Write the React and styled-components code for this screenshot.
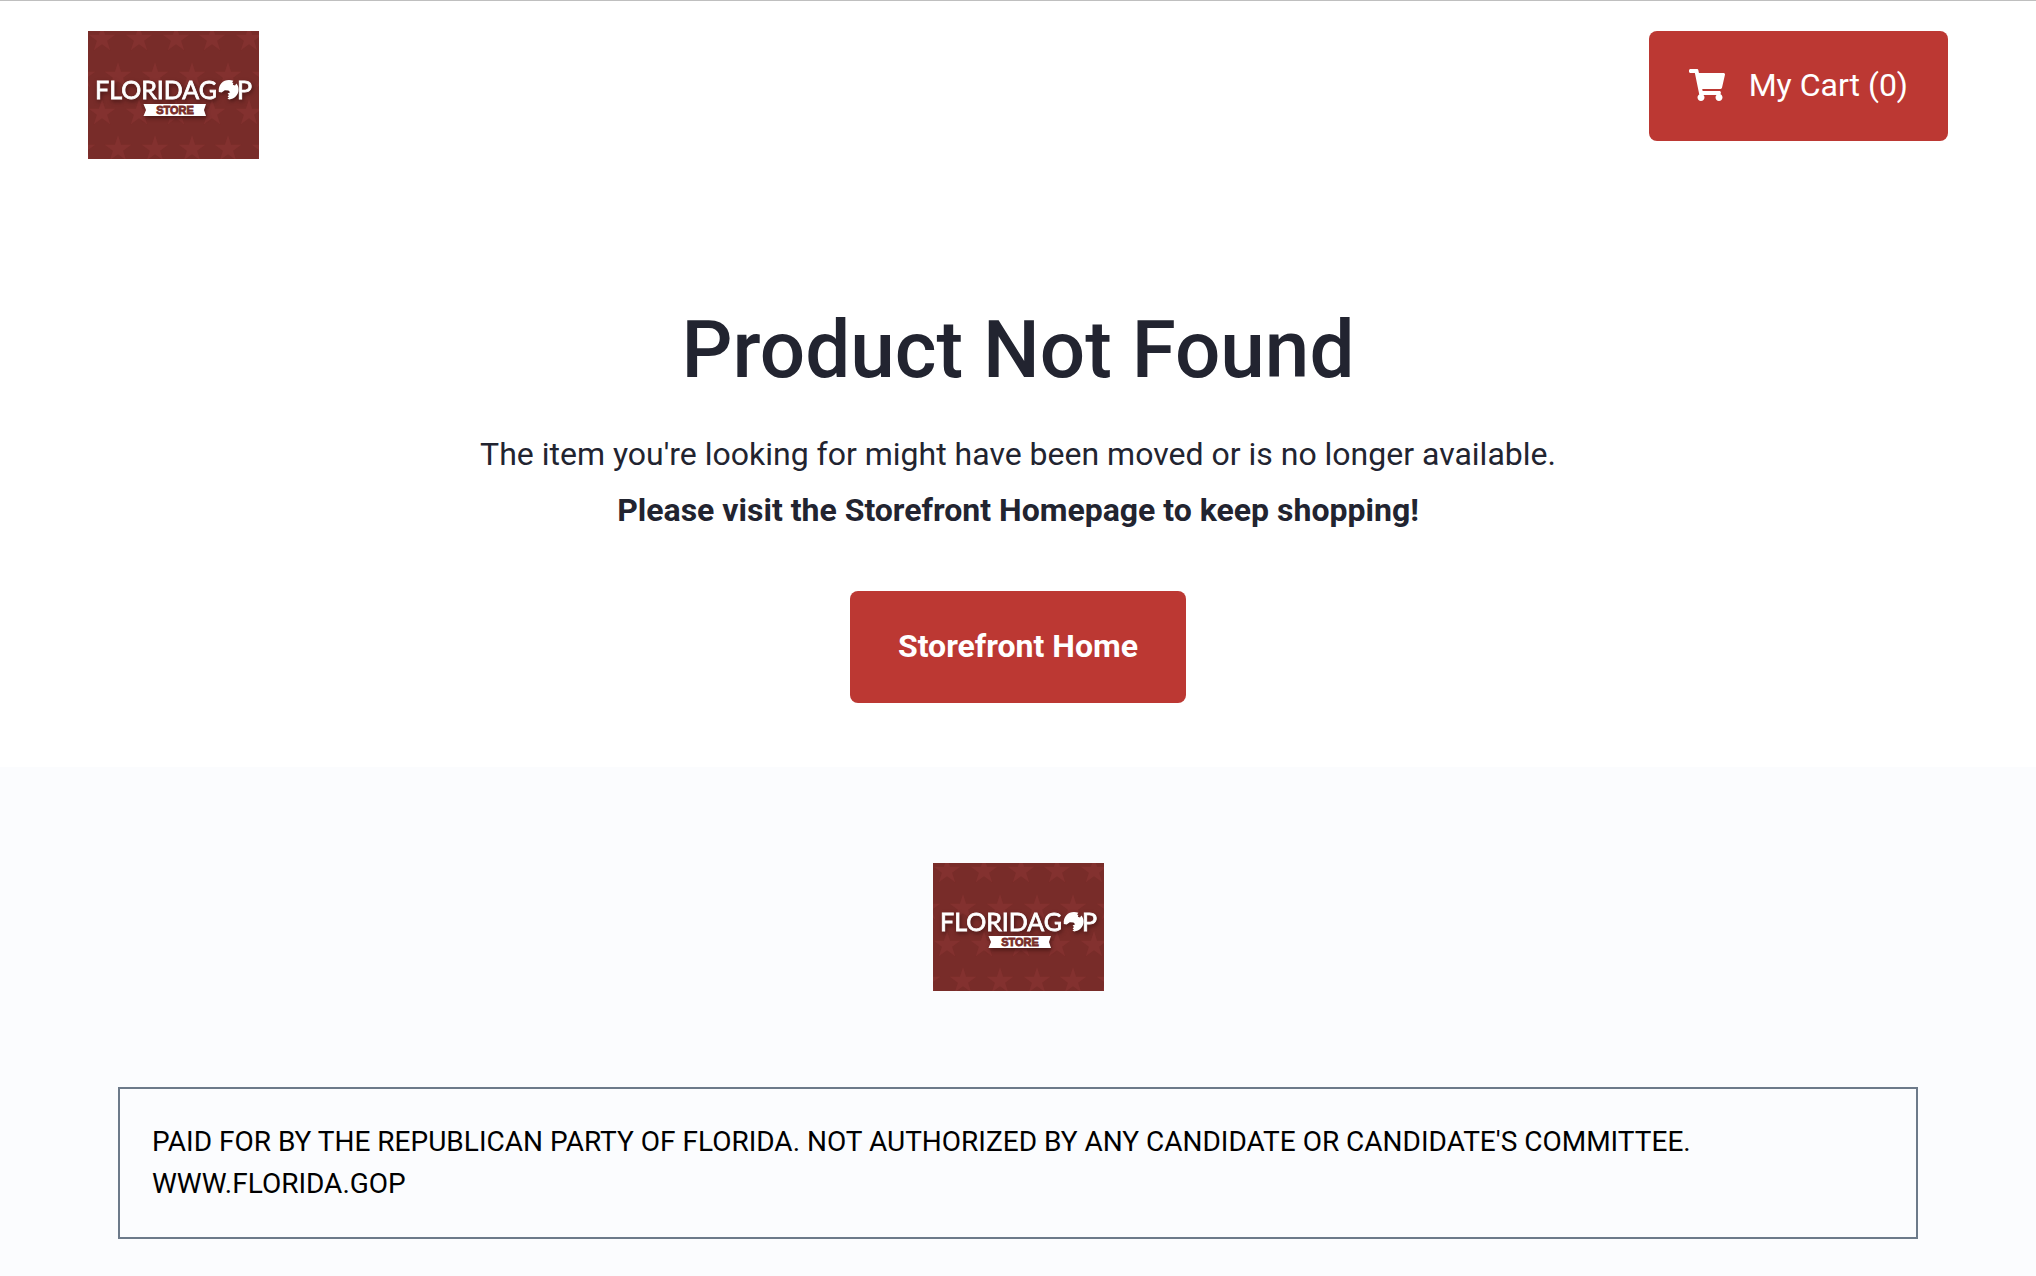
import React from "react";
import styled, { createGlobalStyle } from "styled-components";
import { FaShoppingCart } from "react-icons/fa";

const Theme = {
  primary: "#bc3833",
  text: "#222430",
  surface: "#fbfcfe",
  border: "#6c7a8a",
  font: "Roboto, sans-serif",
};

const GlobalStyle = createGlobalStyle`
  * {
    box-sizing: border-box;
  }

  body {
    margin: 0;
    background-color: #ffffff;
    color: ${Theme.text};
    font-family: ${Theme.font};
    font-size: 32px;
    line-height: 56px;
  }
`;

const Page = styled.div`
  display: flex;
  flex-direction: column;
  min-height: 100vh;
  border-top: 1px solid #bfbfbf;
`;

const Header = styled.header`
  display: flex;
  justify-content: space-between;
  align-items: flex-start;
  width: 100%;
  max-width: 1920px;
  margin: 0 auto;
  padding: 30px;
`;

const LogoLink = styled.a`
  display: block;
  width: 171px;
`;

const LogoImage = styled.svg`
  display: block;
  width: 100%;
  height: auto;
`;

const CartButton = styled.button`
  display: flex;
  align-items: center;
  gap: 24px;
  padding: 26px 40px 28px;
  border: none;
  border-radius: 8px;
  background-color: ${Theme.primary};
  color: #ffffff;
  font-family: ${Theme.font};
  font-size: 32px;
  line-height: 56px;
  cursor: pointer;
`;

const CartIcon = styled(FaShoppingCart)`
  width: 36px;
  height: 32px;
`;

const Main = styled.main`
  display: flex;
  flex-direction: column;
  align-items: center;
  padding: 113px 32px 64px;
  text-align: center;
`;

const Title = styled.h1`
  margin: 0 0 28px;
  font-size: 80px;
  font-weight: 500;
  line-height: 96px;
`;

const Message = styled.p`
  margin: 0;
  font-weight: ${({ $bold }) => ($bold ? 700 : 400)};
`;

const HomeLink = styled.a`
  margin-top: 53px;
  padding: 27px 48px 29px;
  border-radius: 8px;
  background-color: ${Theme.primary};
  color: #ffffff;
  font-weight: 700;
  text-decoration: none;
`;

const Footer = styled.footer`
  display: flex;
  flex: 1;
  flex-direction: column;
  align-items: center;
  gap: 96px;
  padding: 96px 32px 36px;
  background-color: ${Theme.surface};
`;

const Disclaimer = styled.p`
  width: 100%;
  max-width: 1800px;
  margin: 0;
  padding: 32px;
  border: 2px solid ${Theme.border};
  color: #000000;
  font-size: 28px;
  line-height: 42px;
`;

const starRows = [
  { y: 8, x: [14, 51, 88, 124, 161] },
  { y: 45, x: [-6, 30, 67, 104, 140, 177] },
  { y: 82, x: [14, 51, 88, 124, 161] },
  { y: 118, x: [-6, 30, 67, 104, 140, 177] },
];

const Logo = () => (
  <LogoImage viewBox="0 0 171 128" role="img" aria-label="Florida GOP Store">
    <rect width="171" height="128" fill="#782c29" />
    <g fill="#83312f">
      {starRows.map((row) =>
        row.x.map((x) => (
          <path
            key={`${x}-${row.y}`}
            transform={`translate(${x} ${row.y})`}
            d="M0 -14L3.1 -4.3H13.3L5.1 1.7L8.2 11.3L0 5.3L-8.2 11.3L-5.1 1.7L-13.3 -4.3H-3.1Z"
          />
        ))
      )}
    </g>
    <g style={{ filter: "drop-shadow(1px 2px 2px rgba(40, 8, 8, 0.6))" }}>
      <g
        fill="#ffffff"
        stroke="#ffffff"
        strokeWidth="0.8"
        fontFamily="Lato, sans-serif"
        fontWeight="400"
        fontSize="25"
      >
        <text x="7" y="68">FLORIDAG</text>
        <text x="149" y="68">P</text>
      </g>
      {/* elephant head inside the O */}
      <path
        fill="#ffffff"
        d="M130.8 61C130 53.5 135 49 141 49C142.6 49 144 49.3 145.3 49.8L144.2 51.4L145.4 52.6L144.8 53.8L147 54.4L148.4 52.6C149.8 54.2 150.6 56.3 150.6 58.6C150.6 63.8 146.6 68.2 141.2 68.4L139.4 67.6L141 66.4L139.6 65.4L141 64L139.6 62.6L142.2 61.2L140.4 59.4L136.8 59.2L133.6 61.4Z"
      />
      <path fill="#ffffff" d="M55.5 73H118L116 79L118 85H55.5L58 79Z" />
    </g>
    <text
      x="87"
      y="83"
      textAnchor="middle"
      fill="#782c29"
      stroke="#782c29"
      strokeWidth="0.8"
      fontFamily="Liberation Sans, sans-serif"
      fontWeight="700"
      fontSize="11"
    >
      STORE
    </text>
  </LogoImage>
);

const App = () => {
  return (
    <>
      <GlobalStyle />
      <Page>
        <Header>
          <LogoLink href="#home">
            <Logo />
          </LogoLink>
          <CartButton type="button">
            <CartIcon />
            <span>My Cart (0)</span>
          </CartButton>
        </Header>
        <Main>
          <Title>Product Not Found</Title>
          <Message>The item you're looking for might have been moved or is no longer available.</Message>
          <Message $bold>Please visit the Storefront Homepage to keep shopping!</Message>
          <HomeLink href="#home">Storefront Home</HomeLink>
        </Main>
        <Footer>
          <LogoLink href="#home">
            <Logo />
          </LogoLink>
          <Disclaimer>
            PAID FOR BY THE REPUBLICAN PARTY OF FLORIDA. NOT AUTHORIZED BY ANY CANDIDATE OR CANDIDATE'S COMMITTEE.
            <br />
            WWW.FLORIDA.GOP
          </Disclaimer>
        </Footer>
      </Page>
    </>
  );
};

export default App;
